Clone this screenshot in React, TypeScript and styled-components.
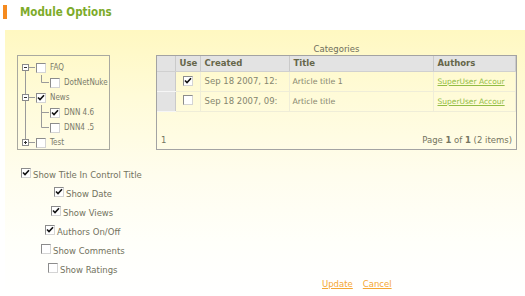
import styled, { createGlobalStyle } from "styled-components";

const GlobalStyle = createGlobalStyle`
  html, body {
    margin: 0;
    padding: 0;
    background: #ffffff;
  }
  body {
    font-family: "DejaVu Sans", Verdana, sans-serif;
    font-size: 8.5px;
    color: #6a6a58;
  }
`;

const Page = styled.div`
  width: 525px;
  height: 296px;
  overflow: hidden;
`;

const Header = styled.header`
  display: flex;
  align-items: flex-start;
  height: 30px;
  padding: 5px 0 0 3px;
  box-sizing: border-box;
`;

const Marker = styled.span`
  width: 4px;
  height: 14px;
  background: #f58a1f;
`;

const Title = styled.h1`
  margin: 0 0 0 13px;
  font-family: "DejaVu Sans Condensed", "DejaVu Sans", sans-serif;
  font-weight: bold;
  font-size: 11.5px;
  line-height: 14px;
  color: #7dab2a;
`;

const Panel = styled.section`
  margin-left: 5px;
  height: 266px;
  padding-top: 13px;
  box-sizing: border-box;
  background: linear-gradient(
    #fff8c1 0,
    #fffbd8 25%,
    #fffdee 55%,
    #fffffa 80%,
    #ffffff 100%
  );
`;

const TopRow = styled.div`
  display: flex;
  align-items: flex-end;
  padding-left: 12px;
`;

const TreeBox = styled.div`
  width: 93px;
  height: 95px;
  box-sizing: border-box;
  border: 1px solid #a9a9a0;
  padding: 4px 0 0 3px;
  margin-right: 46px;
  overflow: hidden;
  font-family: "DejaVu Sans Condensed", "DejaVu Sans", sans-serif;
  font-size: 8px;
  color: #7a7a6a;
`;

const TreeRow = styled.div`
  display: flex;
  align-items: center;
  height: 15px;
  white-space: nowrap;
`;

const TreeLabel = styled.span`
  margin-left: 4px;
`;

const GridSection = styled.div`
  width: 361px;
  display: flex;
  flex-direction: column;
`;

const Caption = styled.div`
  height: 12px;
  line-height: 12px;
  text-align: center;
  color: #6e6e5c;
`;

const Grid = styled.div`
  height: 95px;
  box-sizing: border-box;
  border: 1px solid #a3a3a3;
  display: flex;
  flex-direction: column;
`;

const Table = styled.table`
  width: 100%;
  border-collapse: collapse;
  table-layout: fixed;
`;

const HeadCell = styled.th<{ $w?: number }>`
  width: ${(p) => (p.$w ? `${p.$w}px` : "auto")};
  height: 15px;
  padding: 0 4px;
  box-sizing: border-box;
  background: #e3e3e3;
  border-right: 1px solid #cacaca;
  border-bottom: 1px solid #d0d0d0;
  text-align: left;
  font-weight: bold;
  color: #66664a;
  white-space: nowrap;
  overflow: hidden;
`;

const SelCell = styled.td`
  height: 19px;
  padding: 0;
  background: #e3e3e3;
  border-right: 1px solid #cacaca;
  border-bottom: 1px solid #f6f6f6;
`;

const Cell = styled.td<{ $center?: boolean; $small?: boolean }>`
  height: 19px;
  padding: 0 4px 0 ${(p) => (p.$small ? 3 : 4)}px;
  box-sizing: border-box;
  border-right: 1px solid #efedd8;
  border-bottom: 1px solid #efedd8;
  text-align: ${(p) => (p.$center ? "center" : "left")};
  font-size: ${(p) => (p.$small ? "7.8px" : "8.5px")};
  white-space: nowrap;
  overflow: hidden;
  color: #86866f;
`;

const AuthorLink = styled.a`
  color: #93bd45;
  font-size: 7.5px;
  text-decoration: underline;
`;

const GridFooter = styled.div`
  margin-top: auto;
  display: flex;
  justify-content: space-between;
  padding: 0 4px 3px 4px;
  line-height: 12px;
  color: #74745f;

  b {
    font-weight: bold;
  }
`;

const Options = styled.div`
  display: flex;
  flex-direction: column;
  margin-top: 15px;
`;

const OptionRow = styled.label<{ $indent: number }>`
  display: flex;
  align-items: flex-start;
  height: 19px;
  padding-left: ${(p) => p.$indent}px;
  padding-top: 3px;
  box-sizing: border-box;
  white-space: nowrap;
`;

const OptionText = styled.span`
  margin-left: 2px;
  padding-top: 2px;
  line-height: 10px;
  color: #72725e;
`;

const Actions = styled.div`
  display: flex;
  gap: 10px;
  padding-left: 317px;
  line-height: 10px;
`;

const ActionLink = styled.a`
  color: #f5a733;
  text-decoration: underline;
`;

const Box = styled.span`
  display: inline-flex;
  flex: none;
  width: 10px;
  height: 10px;
  box-sizing: border-box;
  border: 1px solid #8c8c8c;
  border-right-color: #d4d4d4;
  border-bottom-color: #d4d4d4;
  background: #ffffff;
`;

function Check({ checked }: { checked?: boolean }) {
  return (
    <Box>
      {checked ? (
        <svg width="8" height="8" viewBox="0 0 8 8">
          <path d="M1 3.5 L3 5.5 L7 1.2" fill="none" stroke="#111" strokeWidth="1.6" />
        </svg>
      ) : null}
    </Box>
  );
}

function RootGutter({ up, down, open }: { up?: boolean; down?: boolean; open?: boolean }) {
  return (
    <svg width="15" height="15" viewBox="0 0 15 15" style={{ flex: "none" }}>
      {up ? <line x1="4.5" y1="0" x2="4.5" y2="4.5" stroke="#9a9a9a" /> : null}
      {down ? <line x1="4.5" y1="10.5" x2="4.5" y2="15" stroke="#9a9a9a" /> : null}
      <rect x="1.5" y="4.5" width="6" height="6" fill="#fff" stroke="#8a8a8a" />
      <line x1="3" y1="7.5" x2="6" y2="7.5" stroke="#333" />
      {!open ? <line x1="4.5" y1="6" x2="4.5" y2="9" stroke="#333" /> : null}
      <line x1="8" y1="7.5" x2="14" y2="7.5" stroke="#9a9a9a" />
    </svg>
  );
}

function ChildGutter({ more }: { more?: boolean }) {
  return (
    <>
      <svg width="15" height="15" viewBox="0 0 15 15" style={{ flex: "none" }}>
        <line x1="4.5" y1="0" x2="4.5" y2="15" stroke="#9a9a9a" />
      </svg>
      <svg width="14" height="15" viewBox="0 0 14 15" style={{ flex: "none" }}>
        <line x1="5.5" y1="0" x2="5.5" y2={more ? 15 : 7.5} stroke="#9a9a9a" />
        <line x1="5.5" y1="7.5" x2="13" y2="7.5" stroke="#9a9a9a" />
      </svg>
    </>
  );
}

const options = [
  { label: "Show Title In Control Title", indent: 16, checked: true },
  { label: "Show Date", indent: 49, checked: true },
  { label: "Show Views", indent: 46, checked: true },
  { label: "Authors On/Off", indent: 40, checked: true },
  { label: "Show Comments", indent: 36, checked: false },
  { label: "Show Ratings", indent: 43, checked: false },
];

const articles = [
  { use: true, created: "Sep 18 2007, 12:", title: "Article title 1" },
  { use: false, created: "Sep 18 2007, 09:", title: "Article title" },
];

export default function App() {
  return (
    <Page>
      <GlobalStyle />
      <Header>
        <Marker />
        <Title>Module Options</Title>
      </Header>
      <Panel>
        <TopRow>
          <TreeBox>
            <TreeRow>
              <RootGutter down open />
              <Check />
              <TreeLabel>FAQ</TreeLabel>
            </TreeRow>
            <TreeRow>
              <ChildGutter />
              <Check />
              <TreeLabel>DotNetNuke</TreeLabel>
            </TreeRow>
            <TreeRow>
              <RootGutter up down open />
              <Check checked />
              <TreeLabel>News</TreeLabel>
            </TreeRow>
            <TreeRow>
              <ChildGutter more />
              <Check checked />
              <TreeLabel>DNN 4.6</TreeLabel>
            </TreeRow>
            <TreeRow>
              <ChildGutter />
              <Check />
              <TreeLabel>DNN4 .5</TreeLabel>
            </TreeRow>
            <TreeRow>
              <RootGutter up />
              <Check />
              <TreeLabel>Test</TreeLabel>
            </TreeRow>
          </TreeBox>
          <GridSection>
            <Caption>Categories</Caption>
            <Grid>
              <Table>
                <thead>
                  <tr>
                    <HeadCell $w={18} />
                    <HeadCell $w={25}>Use</HeadCell>
                    <HeadCell $w={89}>Created</HeadCell>
                    <HeadCell $w={144}>Title</HeadCell>
                    <HeadCell>Authors</HeadCell>
                  </tr>
                </thead>
                <tbody>
                  {articles.map((a) => (
                    <tr key={a.created}>
                      <SelCell />
                      <Cell $center>
                        <Check checked={a.use} />
                      </Cell>
                      <Cell>{a.created}</Cell>
                      <Cell $small>{a.title}</Cell>
                      <Cell>
                        <AuthorLink href="#">SuperUser Accour</AuthorLink>
                      </Cell>
                    </tr>
                  ))}
                </tbody>
              </Table>
              <GridFooter>
                <span>1</span>
                <span>
                  Page <b>1</b> of <b>1</b> (2 items)
                </span>
              </GridFooter>
            </Grid>
          </GridSection>
        </TopRow>
        <Options>
          {options.map((o) => (
            <OptionRow key={o.label} $indent={o.indent}>
              <Check checked={o.checked} />
              <OptionText>{o.label}</OptionText>
            </OptionRow>
          ))}
        </Options>
        <Actions>
          <ActionLink href="#">Update</ActionLink>
          <ActionLink href="#">Cancel</ActionLink>
        </Actions>
      </Panel>
    </Page>
  );
}
